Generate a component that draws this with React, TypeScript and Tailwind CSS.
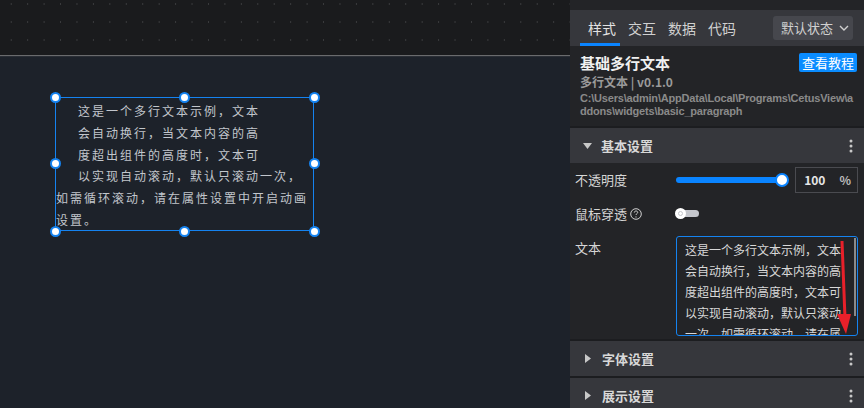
import React from "react";

const CJK = { fontFamily: '"Noto Sans CJK SC", "Noto Sans", sans-serif' };

function Kebab() {
  return (
    <svg width="4" height="14" viewBox="0 0 4 14" className="block">
      <circle cx="2" cy="2" r="1.5" fill="#c8c8c8" />
      <circle cx="2" cy="7" r="1.5" fill="#c8c8c8" />
      <circle cx="2" cy="12" r="1.5" fill="#c8c8c8" />
    </svg>
  );
}

function Handle({ x, y }: { x: number; y: number }) {
  return (
    <div
      className="absolute w-[11px] h-[11px] rounded-full bg-white border-2 border-[#1583f0]"
      style={{ left: x - 5.5, top: y - 5.5 }}
    />
  );
}

function SectionHeader({ title, open }: { title: string; open?: boolean }) {
  return (
    <div className="h-[37px] shrink-0 bg-[#36373c] flex items-center pl-[13px] pr-[11px] border-t-2 border-[#1c1d20]">
      {open ? (
        <svg width="9" height="6" viewBox="0 0 9 6" className="mr-[9px]">
          <path d="M0 0 L9 0 L4.5 6 Z" fill="#c8c8c8" />
        </svg>
      ) : (
        <svg width="6" height="9" viewBox="0 0 6 9" className="ml-[2px] mr-[11px]">
          <path d="M0 0 L6 4.5 L0 9 Z" fill="#c8c8c8" />
        </svg>
      )}
      <span className="text-[13px] font-bold text-[#d8d8d8] flex-1" style={CJK}>
        {title}
      </span>
      <Kebab />
    </div>
  );
}

export default function App() {
  const lines = [
    { t: "这是一个多行文本示例，文本", i: true },
    { t: "会自动换行，当文本内容的高", i: true },
    { t: "度超出组件的高度时，文本可", i: true },
    { t: "以实现自动滚动，默认只滚动一次，", i: true },
    { t: "如需循环滚动，请在属性设置中开启动画", i: false },
    { t: "设置。", i: false },
  ];
  const taLines = [
    "这是一个多行文本示例，文本",
    "会自动换行，当文本内容的高",
    "度超出组件的高度时，文本可",
    "以实现自动滚动，默认只滚动",
    "一次，如需循环滚动，请在属",
    "性设置中开启动画设置。",
  ];
  return (
    <div className="w-[864px] h-[408px] flex overflow-hidden bg-[#232427]" style={CJK}>
      {/* Canvas */}
      <div className="w-[570px] h-full flex flex-col">
        <div className="h-[55px] bg-[#1a1b1d] bg-[radial-gradient(circle,#3a3b3d_0.8px,transparent_1px)] bg-[length:16.45px_18px] bg-[position:3px_-5px]" />
        <div className="h-px bg-[#6a6b6d]" />
        <div className="h-px bg-[#2a2e35]" />
        <div className="flex-1 bg-[#1d222a] relative">
          <div className="absolute left-[55px] top-[40px] w-[259px] h-[134px] border border-[#1583f0]">
            <div className="pt-[2px] text-[12px] leading-[21.8px] tracking-[2px] text-[#c2c6cc]">
              {lines.map((l, k) => (
                <div key={k} className={l.i ? "pl-[22px] whitespace-nowrap" : "whitespace-nowrap"}>
                  {l.t}
                </div>
              ))}
            </div>
          </div>
          <Handle x={55} y={40} />
          <Handle x={184} y={40} />
          <Handle x={314} y={40} />
          <Handle x={55} y={106} />
          <Handle x={314} y={106} />
          <Handle x={55} y={174} />
          <Handle x={184} y={174} />
          <Handle x={314} y={174} />
        </div>
      </div>

      {/* Right panel */}
      <div className="w-[294px] h-full flex flex-col bg-[#232427] relative">
        <div className="h-[10px] shrink-0" />
        <div className="h-[36px] shrink-0 bg-[#36373c] flex items-stretch pl-[12px] pr-[11px]">
          <div className="relative w-[40px] flex items-center justify-center text-[14px] text-[#e2e2e2]">
            样式
            <div className="absolute left-[-2px] right-[2px] bottom-0 h-[3px] bg-[#0a84ff]" />
          </div>
          <div className="w-[40px] flex items-center justify-center text-[14px] text-[#d0d0d0]">交互</div>
          <div className="w-[40px] flex items-center justify-center text-[14px] text-[#d0d0d0]">数据</div>
          <div className="w-[40px] flex items-center justify-center text-[14px] text-[#d0d0d0]">代码</div>
          <div className="flex-1" />
          <div className="self-center h-[24px] w-[80px] rounded-[3px] bg-[#46474d] flex items-center pl-[8px] gap-[6px] text-[13px] text-[#d0d0d0]">
            默认状态
            <svg width="10" height="6" viewBox="0 0 10 6">
              <path d="M1 1 L5 5 L9 1" stroke="#d0d0d0" strokeWidth="1.4" fill="none" />
            </svg>
          </div>
        </div>
        <div className="h-[80px] shrink-0 pl-[10px] pr-[7px] pt-[7px] relative">
          <div className="text-[15px] font-bold text-[#f0f0f0] leading-[20px]">基础多行文本</div>
          <div className="absolute right-[7px] top-[7px] h-[19px] px-[3px] bg-[#0a8cff] rounded-[2px] text-[13px] leading-[19px] text-white">
            查看教程
          </div>
          <div className="text-[12px] text-[#9a9a9a] leading-[17px] font-semibold">多行文本 | v0.1.0</div>
          <div
            className="mt-[2px] text-[11px] font-bold text-[#8a8a8a] leading-[13px] break-all tracking-[-0.2px]"
            style={{ fontFamily: '"Liberation Sans", sans-serif' }}
          >
            C:\Users\admin\AppData\Local\Programs\CetusView\addons\widgets\basic_paragraph
          </div>
        </div>
        <SectionHeader title="基本设置" open />
        <div className="flex flex-col shrink-0 pl-[5px] pr-[6px]">
          <div className="h-[34px] flex items-center">
            <span className="w-[101px] text-[13px] text-[#d6d6d6]">不透明度</span>
            <div className="relative w-[112px] h-[20px] flex items-center">
              <div className="w-full h-[6px] rounded-full bg-[#0a84ff]" />
              <div className="absolute right-[-2px] w-[14px] h-[14px] rounded-full bg-white border-2 border-[#0a84ff]" />
            </div>
            <div className="ml-[8px] w-[63px] h-[26px] border border-[#4a4b50] flex items-center justify-end pr-[6px] text-[12px] text-[#e6e6e6] font-semibold">
              <span className="mr-[14px]">100</span>
              <span className="text-[#bdbdbd]">%</span>
            </div>
          </div>
          <div className="h-[33px] flex items-center">
            <span className="w-[101px] flex items-center gap-[3px] text-[13px] text-[#d6d6d6]">
              鼠标穿透
              <svg width="12" height="12" viewBox="0 0 12 12">
                <circle cx="6" cy="6" r="5.3" stroke="#cfcfcf" strokeWidth="1" fill="none" />
                <path d="M4.3 4.6 C4.3 3.6 5 3 6 3 C7 3 7.7 3.6 7.7 4.5 C7.7 5.6 6 5.7 6 7" stroke="#cfcfcf" strokeWidth="1" fill="none" />
                <circle cx="6" cy="8.9" r="0.6" fill="#cfcfcf" />
              </svg>
            </span>
            <div className="relative w-[23px] h-[7px] rounded-full bg-[#c4c6cc]">
              <div className="absolute left-[-1px] top-[-2px] w-[11px] h-[11px] rounded-full bg-white flex items-center justify-center">
                <div className="w-[5px] h-[5px] rounded-full border border-[#c4c6cc]" />
              </div>
            </div>
          </div>
          <div className="flex pt-[6px] pb-[3px]">
            <span className="w-[101px] pt-[2px] text-[13px] text-[#d6d6d6]">文本</span>
            <div className="relative w-[182px] h-[100px] border border-[#1583f0] rounded-[3px] overflow-hidden">
              <div className="pl-[8px] pt-[2px] text-[12px] leading-[21px] text-[#d8d8d8] whitespace-nowrap">
                {taLines.map((t, k) => (
                  <div key={k}>{t}</div>
                ))}
              </div>
              <div className="absolute right-[1px] top-[1px] w-[2px] h-[78px] bg-[#8a8a8a]" />
            </div>
          </div>
        </div>
        <SectionHeader title="字体设置" />
        <SectionHeader title="展示设置" />
        {/* red annotation arrow */}
        <svg
          className="absolute left-[263px] top-[238px]"
          width="20"
          height="98"
          viewBox="0 0 20 98"
        >
          <path d="M9 3 L12 80" stroke="#e8202a" strokeWidth="3" fill="none" />
          <path d="M4 76 L13 96 L18 76 Z" fill="#e8202a" />
        </svg>
      </div>
    </div>
  );
}
